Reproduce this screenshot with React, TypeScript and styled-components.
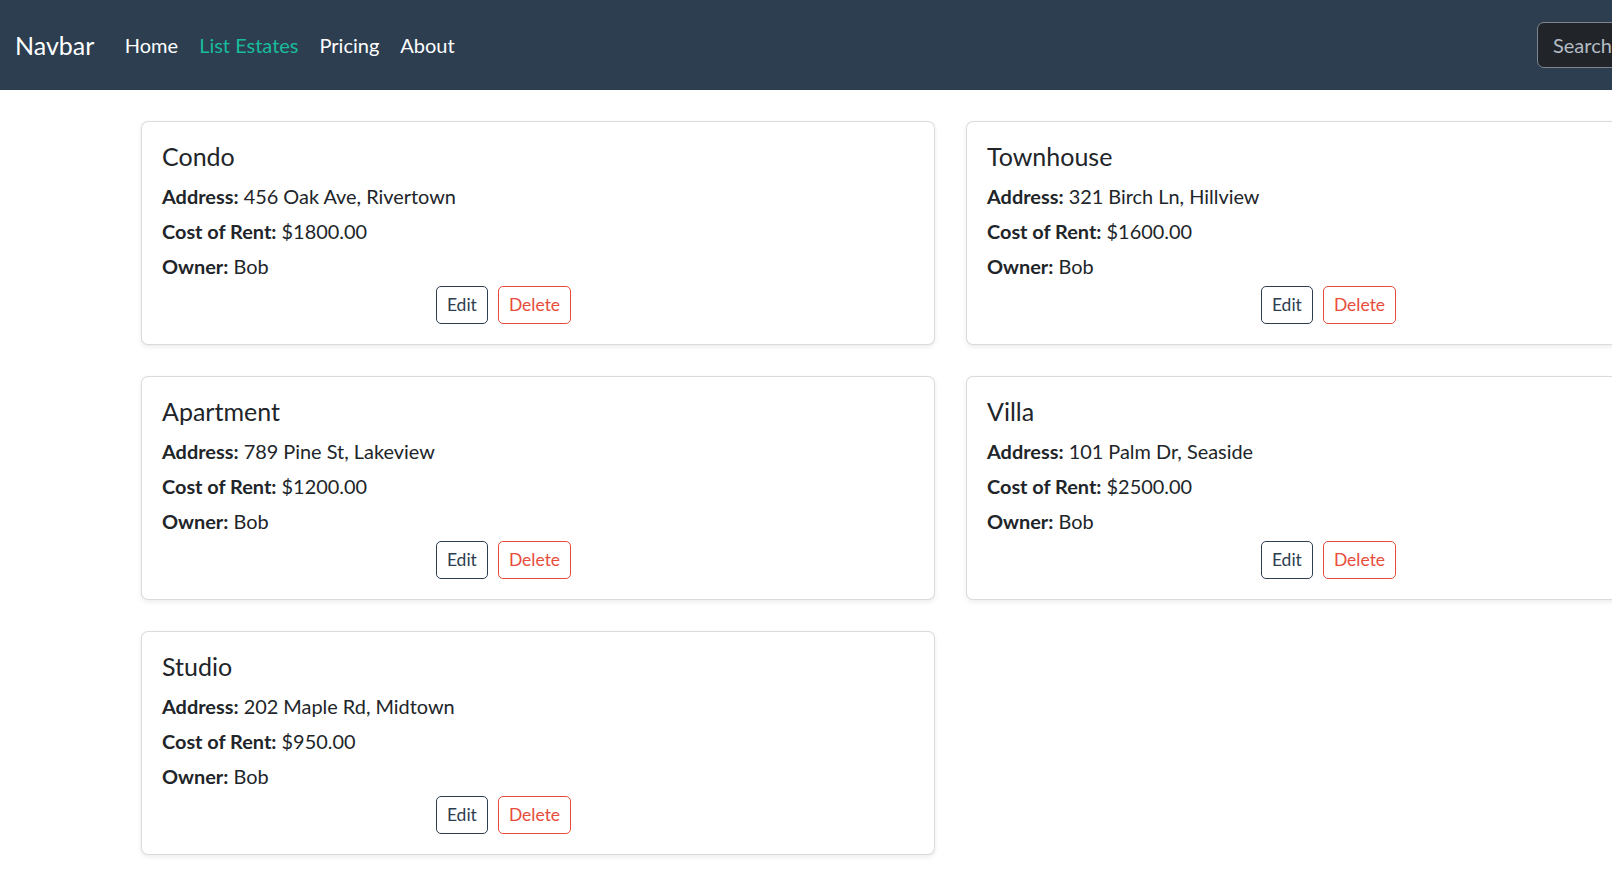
import styled, { createGlobalStyle } from "styled-components";

const GlobalStyle = createGlobalStyle`
  html, body {
    margin: 0;
    padding: 0;
    overflow: hidden;
    background: #ffffff;
  }

  body {
    font-family: "Lato", "Liberation Sans", sans-serif;
    color: #212529;
  }

  * {
    box-sizing: border-box;
  }
`;

const Page = styled.div`
  width: 1800px;
`;

const Nav = styled.nav`
  display: flex;
  align-items: center;
  height: 90px;
  padding: 0 15px;
  background-color: #2c3e50;
`;

const Brand = styled.a`
  margin-right: 20px;
  font-size: 25px;
  line-height: 30px;
  color: #ffffff;
  text-decoration: none;
`;

const NavLinks = styled.ul`
  display: flex;
  margin: 0;
  padding: 0;
  list-style: none;
`;

const NavLink = styled.a<{ $active?: boolean }>`
  display: block;
  padding: 10px 10.5px;
  font-size: 20px;
  line-height: 30px;
  color: ${(p) => (p.$active ? "#18bc9c" : "#ffffff")};
  text-decoration: none;
`;

const SearchInput = styled.input`
  width: 248px;
  height: 46px;
  margin-left: auto;
  padding: 7px 15px;
  font-family: "Lato", "Liberation Sans", sans-serif;
  font-size: 20px;
  color: #dee2e6;
  background-color: #212529;
  border: 1px solid #7d868f;
  border-radius: 7px;
  outline: none;

  &::placeholder {
    color: #b4bcc4;
  }
`;

const Grid = styled.main`
  display: grid;
  grid-template-columns: repeat(2, 794px);
  gap: 31px 31px;
  padding: 31px 0 31px 141px;
`;

const Card = styled.div`
  padding: 19px 20px 20px;
  background: #ffffff;
  border: 1px solid rgba(0, 0, 0, 0.14);
  border-radius: 7px;
  box-shadow: 0 2px 5px rgba(0, 0, 0, 0.08);
`;

const Title = styled.h5`
  margin: 0 0 10px;
  font-size: 25px;
  font-weight: 400;
  line-height: 30px;
`;

const Field = styled.p`
  margin: 0 0 5px;
  font-size: 19.9px;
  line-height: 30px;

  b {
    font-weight: 700;
  }
`;

const Actions = styled.div`
  display: flex;
  justify-content: center;
  gap: 10px;
  padding-right: 69px;
`;

const Button = styled.button<{ $tone: string }>`
  padding: 5px 10px;
  font-family: "Lato", "Liberation Sans", sans-serif;
  font-size: 17.5px;
  line-height: 26px;
  color: ${(p) => p.$tone};
  background: #ffffff;
  border: 1px solid ${(p) => p.$tone};
  border-radius: 5px;
  cursor: pointer;
`;

const estates = [
  { name: "Condo", address: "456 Oak Ave, Rivertown", rent: "1800.00" },
  { name: "Townhouse", address: "321 Birch Ln, Hillview", rent: "1600.00" },
  { name: "Apartment", address: "789 Pine St, Lakeview", rent: "1200.00" },
  { name: "Villa", address: "101 Palm Dr, Seaside", rent: "2500.00" },
  { name: "Studio", address: "202 Maple Rd, Midtown", rent: "950.00" },
];

const App = () => {
  return (
    <Page>
      <GlobalStyle />
      <Nav>
        <Brand href="#">Navbar</Brand>
        <NavLinks>
          <li><NavLink href="#">Home</NavLink></li>
          <li><NavLink href="#" $active>List Estates</NavLink></li>
          <li><NavLink href="#">Pricing</NavLink></li>
          <li><NavLink href="#">About</NavLink></li>
        </NavLinks>
        <SearchInput placeholder="Search" />
      </Nav>
      <Grid>
        {estates.map((e) => (
          <Card key={e.name}>
            <Title>{e.name}</Title>
            <Field><b>Address:</b> {e.address}</Field>
            <Field><b>Cost of Rent:</b> ${e.rent}</Field>
            <Field><b>Owner:</b> Bob</Field>
            <Actions>
              <Button $tone="#2c3e50">Edit</Button>
              <Button $tone="#e74c3c">Delete</Button>
            </Actions>
          </Card>
        ))}
      </Grid>
    </Page>
  );
};

export default App;
